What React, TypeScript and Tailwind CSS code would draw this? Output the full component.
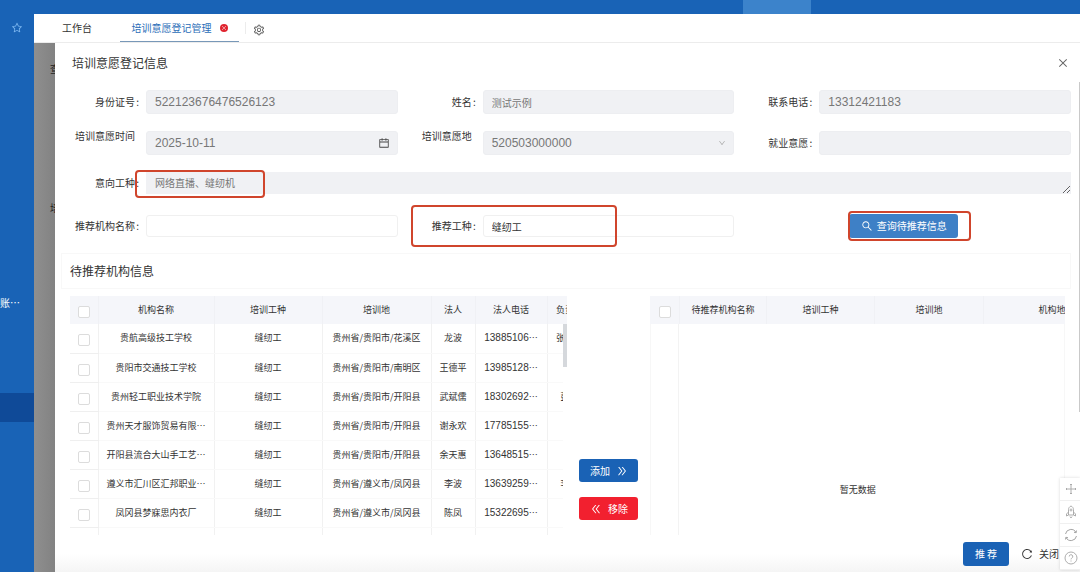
import React, { useState } from "react";
import { AiOutlineClose, AiOutlineReload, AiOutlineSearch, AiOutlineSetting, AiOutlineStar } from "react-icons/ai";
import { AiOutlineCalendar, AiOutlineDoubleLeft, AiOutlineDoubleRight, AiOutlineDown } from "react-icons/ai";

interface Org {
  name: string;
  job: string;
  place: string;
  person: string;
  phone: string;
  manager: string;
}

const orgs: Org[] = [
  { name: "贵航高级技工学校", job: "缝纫工", place: "贵州省/贵阳市/花溪区", person: "龙波", phone: "13885106", manager: "张永红" },
  { name: "贵阳市交通技工学校", job: "缝纫工", place: "贵州省/贵阳市/南明区", person: "王德平", phone: "13985128", manager: "" },
  { name: "贵州轻工职业技术学院", job: "缝纫工", place: "贵州省/贵阳市/开阳县", person: "武斌儒", phone: "18302692", manager: "彭丽" },
  { name: "贵州天才服饰贸易有限…", job: "缝纫工", place: "贵州省/贵阳市/开阳县", person: "谢永欢", phone: "17785155", manager: "" },
  { name: "开阳县流合大山手工艺…", job: "缝纫工", place: "贵州省/贵阳市/开阳县", person: "余天惠", phone: "13648515", manager: "" },
  { name: "遵义市汇川区汇邦职业…", job: "缝纫工", place: "贵州省/遵义市/凤冈县", person: "李波", phone: "13639259", manager: "李波" },
  { name: "凤冈县梦寐思内衣厂", job: "缝纫工", place: "贵州省/遵义市/凤冈县", person: "陈凤", phone: "15322695", manager: "" },
];

const disabledBox =
  "block h-6 w-full appearance-none rounded-[3px] border border-[#edeef1] bg-[#f0f1f4] px-2 text-[#777]";
const editBox = "block h-[22px] w-full rounded-[3px] border border-[#f0f0f0] bg-white px-2 text-[10px] text-[#333]";
const digits = "font-['Liberation_Sans','Noto_Sans_CJK_SC',sans-serif] text-[12px]";

interface FieldProps {
  id: string;
  label: string;
  raised?: boolean;
  className?: string;
  children: React.ReactNode;
}

function Field({ id, label, raised, className, children }: FieldProps) {
  return (
    <div className={"relative flex items-center " + (className || "")}>
      <label
        htmlFor={id}
        className={
          "flex w-[85px] shrink-0 items-end justify-end whitespace-nowrap pr-[7px] " +
          (raised ? "self-start leading-[10px]" : "")
        }
      >
        {label}
        <span className="w-1 text-right">{raised ? "" : ":"}</span>
      </label>
      <div className="relative min-w-0 flex-1">{children}</div>
    </div>
  );
}

function Check({ label }: { label: string }) {
  return (
    <input
      type="checkbox"
      aria-label={label}
      className="mx-auto mt-1 block size-3 appearance-none rounded-[2px] border border-[#dcdcdc] bg-white checked:bg-[#1a62b5]"
    />
  );
}

function LeftTable() {
  return (
    <div className="relative min-w-0 flex-[6] overflow-hidden">
      <table className="w-[522px] table-fixed border-collapse text-center text-[9px]">
        <colgroup>
          <col className="w-7" />
          <col className="w-29" />
          <col className="w-27" />
          <col className="w-[109px]" />
          <col className="w-11" />
          <col className="w-18" />
          <col className="w-[45px]" />
        </colgroup>
        <thead>
          <tr className="h-7 bg-[#f5f6fa] [&>th]:border-r [&>th]:border-[#f0f1f5] [&>th]:font-normal">
            <th><Check label="全选" /></th>
            <th>机构名称</th>
            <th>培训工种</th>
            <th>培训地</th>
            <th>法人</th>
            <th>法人电话</th>
            <th>负责人</th>
          </tr>
        </thead>
        <tbody>
          {orgs.map((org) => (
            <tr
              key={org.name}
              className="h-[29px] whitespace-nowrap [&>td]:border-r [&>td]:border-b [&>td]:border-r-[#f1f1f1] [&>td]:border-b-[#f9f9f9] [&>td:first-child]:border-b-[#efefef]"
            >
              <td><Check label={org.name} /></td>
              <td>{org.name}</td>
              <td>{org.job}</td>
              <td>{org.place}</td>
              <td>{org.person}</td>
              <td>
                <span className="font-['Liberation_Sans',sans-serif] text-[10px]">{org.phone}</span>…
              </td>
              <td>{org.manager}</td>
            </tr>
          ))}
          <tr className="h-[29px] [&>td]:border-r [&>td]:border-[#f1f1f1]">
            <td /><td /><td /><td /><td /><td /><td />
          </tr>
        </tbody>
      </table>
      <div className="absolute top-7 right-0 bottom-0 w-1 bg-white">
        <div className="h-[43px] bg-[#d5d8dc]" />
      </div>
    </div>
  );
}

function RightTable() {
  return (
    <div className="flex min-w-0 flex-[5] flex-col overflow-hidden">
      <table className="w-[479px] table-fixed border-collapse text-center text-[9px]">
        <colgroup>
          <col className="w-[29px]" />
          <col className="w-[87px]" />
          <col className="w-27" />
          <col className="w-[109px]" />
          <col className="w-[146px]" />
        </colgroup>
        <thead>
          <tr className="h-7 bg-[#f5f6fa] [&>th]:border-r [&>th]:border-[#f0f1f5] [&>th]:font-normal">
            <th><Check label="全选待推荐" /></th>
            <th>待推荐机构名称</th>
            <th>培训工种</th>
            <th>培训地</th>
            <th>机构地址</th>
          </tr>
        </thead>
      </table>
      <div className="flex flex-1 border-x border-[#f7f7f7]">
        <div className="w-7 border-r border-[#f3f3f3]" />
        <p className="flex-1 pt-[158px] pr-7 text-center text-[9px] leading-4">暂无数据</p>
      </div>
    </div>
  );
}

function FloatTools() {
  const cell = "flex h-[23px] w-full items-center justify-center border-b border-[#f0f0f0] pl-0.5";
  return (
    <div className="absolute right-0 bottom-0.5 w-5 bg-white text-[#a5a5a5] shadow-[0_0_3px_rgba(0,0,0,0.15)]">
      <button type="button" aria-label="移动" className={cell}>
        <svg viewBox="0 0 12 12" className="size-3" fill="none" stroke="currentColor" strokeWidth="0.9">
          <path d="M6 1v10M1 6h10M5 2l1-1 1 1M5 10l1 1 1-1M2 5L1 6l1 1M10 5l1 1-1 1" />
        </svg>
      </button>
      <button type="button" aria-label="加速" className={cell}>
        <svg viewBox="0 0 12 14" className="h-3.5 w-3" fill="none" stroke="currentColor" strokeWidth="0.9">
          <path d="M3.5 10V4.5C3.5 3 4.700 1.500 6 1c1.300.5 2.500 2 2.500 3.500V10zM3.500 7L1.500 9v2l2-1M8.500 7l2 2v2l-2-1M5 11.500l1 1.500 1-1.500" />
          <circle cx="6" cy="5" r="1" />
        </svg>
      </button>
      <button type="button" aria-label="刷新" className={cell}>
        <svg viewBox="0 0 14 14" className="size-3.5" fill="none" stroke="currentColor" strokeWidth="1">
          <path d="M1.500 6A5.600 5.600 0 0 1 12 4.500M12.500 8A5.600 5.600 0 0 1 2 9.500M12.500 2.500l-.4 2.200-2.100-.4M1.500 11.500l.4-2.200 2.100.4" />
        </svg>
      </button>
      <button type="button" aria-label="帮助" className={cell}>
        <svg viewBox="0 0 14 14" className="size-3.5" fill="none" stroke="currentColor" strokeWidth="0.9">
          <circle cx="7" cy="7" r="6" />
          <path d="M5.200 5.500a1.800 1.800 0 1 1 2.600 1.600c-.5.300-.8.600-.8 1.300M7 9.500v1" />
        </svg>
      </button>
    </div>
  );
}

export default function App() {
  const [orgName, setOrgName] = useState("");
  const [job, setJob] = useState("缝纫工");
  const mark = "pointer-events-none absolute rounded-[4px] border-2 border-[#d0452c]";

  return (
    <div className="relative flex h-screen flex-col overflow-hidden bg-[#1963b6] font-['Noto_Sans_CJK_SC',sans-serif] text-[10px] leading-4 text-[#333]">
      <header className="flex h-3.5 shrink-0 justify-end pr-[269px]">
        <div className="w-[68px] bg-[#3c83cb]" />
      </header>
      <div className="flex min-h-0 flex-1">
        <aside className="flex w-[34px] shrink-0 flex-col overflow-hidden text-white">
          <AiOutlineStar className="mx-auto mt-2 size-3 shrink-0 text-[#79b4ee]" />
          <nav className="mt-[254px] flex flex-col">
            <a href="#account" className="flex h-[29px] items-center justify-end pr-3.5 whitespace-nowrap">
              账…
            </a>
            <a href="#training" aria-label="培训意愿登记管理" className="mt-[76px] h-[29px] bg-[#0f4a98]" />
          </nav>
        </aside>

        <main className="flex min-w-0 flex-1 flex-col">
          <div className="flex h-[29px] shrink-0 items-stretch border-b border-[#ececec] bg-white">
            <button type="button" className="w-[86px] text-center">工作台</button>
            <button
              type="button"
              className="flex w-[119px] items-center justify-center gap-2 border-b border-[#7898b8] text-[#2a6db8]"
            >
              培训意愿登记管理
              <span className="flex size-2 items-center justify-center rounded-full bg-[#e0242f] text-white">
                <AiOutlineClose className="size-1.5" />
              </span>
            </button>
            <span className="my-2 ml-1.5 border-l border-[#ececec]" />
            <button type="button" aria-label="设置" className="ml-[7px] flex items-center pt-1">
              <AiOutlineSetting className="size-3 text-[#555]" />
            </button>
          </div>

          <div className="flex min-h-0 flex-1 bg-[#8b8b8b]">
            {/* page behind the drawer, only its left edge stays visible */}
            <div className="flex w-[21px] shrink-0 flex-col gap-[123px] overflow-hidden bg-linear-to-r from-[#8f8f8f] to-[#828282] pt-[18px] pl-4 text-[#222]">
              <span>查</span>
              <span>培</span>
            </div>
            <section className="flex min-w-0 flex-1 flex-col bg-white">
              <div className="flex h-[39px] shrink-0 items-center justify-between pr-[11px] pl-[17px]">
                <h1 className="text-[12px]">培训意愿登记信息</h1>
                <button type="button" aria-label="关闭">
                  <AiOutlineClose className="size-3 text-[#666]" />
                </button>
              </div>

              <div className="relative flex min-h-0 flex-1 flex-col pr-[9px] pl-1.5">
                <div className="absolute top-0 right-0 h-[330px] w-px bg-[#c9c9c9]" />
                <form className="grid shrink-0 grid-cols-3 gap-y-[17px] pt-2 pb-4" onSubmit={(e) => e.preventDefault()}>
                  <Field id="idNo" label="身份证号">
                    <input id="idNo" disabled value="522123676476526123" className={disabledBox + " " + digits} />
                  </Field>
                  <Field id="name" label="姓名">
                    <input id="name" disabled value="测试示例" className={disabledBox} />
                  </Field>
                  <Field id="phone" label="联系电话">
                    <input id="phone" disabled value="13312421183" className={disabledBox + " " + digits} />
                  </Field>
                  <Field id="date" label="培训意愿时间" raised>
                    <input id="date" disabled value="2025-10-11" className={disabledBox + " " + digits} />
                    <AiOutlineCalendar className="absolute top-1.5 right-2 size-3 text-[#444]" />
                  </Field>
                  <Field id="area" label="培训意愿地" raised>
                    <select id="area" disabled className={disabledBox + " opacity-100 " + digits}>
                      <option>520503000000</option>
                    </select>
                    <AiOutlineDown className="absolute top-2 right-2 size-2 text-[#aaa]" />
                  </Field>
                  <Field id="wish" label="就业意愿">
                    <input id="wish" disabled value="" className={disabledBox} />
                  </Field>
                  <Field id="intent" label="意向工种" className="col-span-3 mb-1">
                    <textarea
                      id="intent"
                      disabled
                      rows={1}
                      value="网络直播、缝纫机"
                      className="block h-[22px] w-full resize-y overflow-hidden bg-[#f0f1f4] px-[9px] py-[3px] text-[#777]"
                    />
                    <span className={mark + " -top-0.5 -left-[11px] h-7 w-[130px]"} />
                  </Field>
                  <Field id="orgName" label="推荐机构名称">
                    <input id="orgName" value={orgName} onChange={(e) => setOrgName(e.target.value)} className={editBox} />
                  </Field>
                  <Field id="job" label="推荐工种">
                    <input id="job" value={job} onChange={(e) => setJob(e.target.value)} className={editBox} />
                    <span className={mark + " -top-2.5 -left-[72px] h-[42px] w-[206px]"} />
                  </Field>
                  <div className="relative flex h-[22px] items-center pl-[115px]">
                    <button
                      type="submit"
                      className="flex h-6 w-[109px] items-center justify-center gap-1 rounded-[3px] bg-[#3e80c6] text-white"
                    >
                      <AiOutlineSearch className="size-3" />
                      查询待推荐信息
                    </button>
                    <span className={mark + " -top-1 left-[114px] h-[30px] w-[123px]"} />
                  </div>
                </form>

                <h2 className="shrink-0 border border-[#f8f8f8] py-[9px] pl-2 text-[12px] leading-4">待推荐机构信息</h2>

                <div className="mt-[7px] flex min-h-0 flex-1 pr-1.5 pl-[9px]">
                  <LeftTable />
                  <div className="flex w-[83px] shrink-0 flex-col items-center gap-[15px] pt-[163px]">
                    <button
                      type="button"
                      className="flex h-[23px] w-[59px] items-center justify-center gap-1.5 rounded-[3px] bg-[#1a62b5] text-white"
                    >
                      添加
                      <AiOutlineDoubleRight className="size-3" />
                    </button>
                    <button
                      type="button"
                      className="flex h-[23px] w-[59px] items-center justify-center gap-1.5 rounded-[3px] bg-[#f2202f] text-white"
                    >
                      <AiOutlineDoubleLeft className="size-3" />
                      移除
                    </button>
                  </div>
                  <RightTable />
                </div>
              </div>

              <footer className="flex h-[37px] shrink-0 items-center justify-end gap-3 bg-linear-to-b from-white from-50% to-[#f5f5f5] pr-[21px]">
                <button type="button" className="h-6 w-[46px] rounded-[3px] bg-[#1a62b5] text-white">
                  推 荐
                </button>
                <button type="button" className="flex items-center gap-1.5">
                  <AiOutlineReload className="size-3" />
                  关闭
                </button>
              </footer>
            </section>
          </div>
        </main>
      </div>
      <FloatTools />
    </div>
  );
}
